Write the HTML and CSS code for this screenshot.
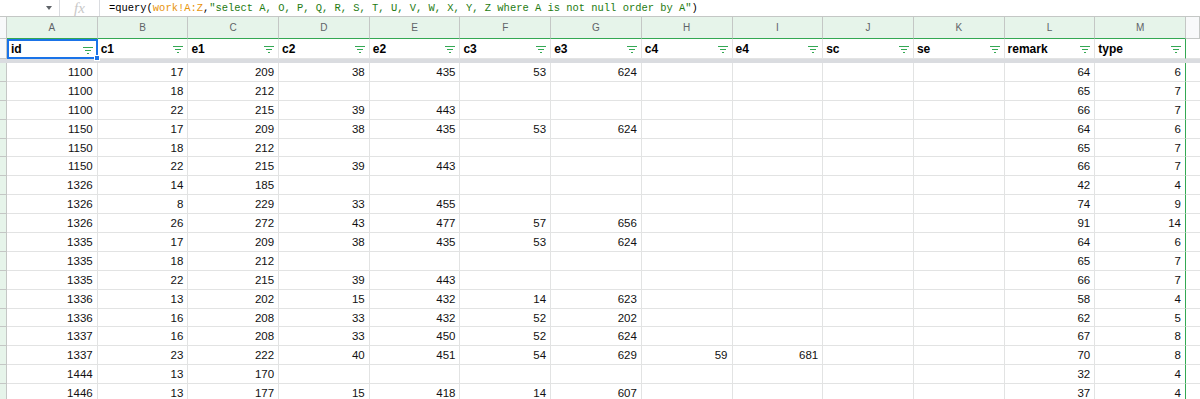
FILE: index.html
```html
<!DOCTYPE html>
<html lang="en">
<head>
	<meta charset="UTF-8">
	<title>work - query</title>
	<link rel="stylesheet" href="styles.css">
</head>
<body>
	<div class="formula-bar">
		<div class="name-box"><span class="arrow"></span></div>
		<div class="fx">fx</div>
		<div class="formula">=query(<span class="ref">work!A:Z</span>,<span class="str">"select A, O, P, Q, R, S, T, U, V, W, X, Y, Z where A is not null order by A"</span>)</div>
	</div>
	<div class="sheet" id="sheet">
		<div class="corner"></div>
		<div class="col-head">A</div>
		<div class="col-head">B</div>
		<div class="col-head">C</div>
		<div class="col-head">D</div>
		<div class="col-head">E</div>
		<div class="col-head">F</div>
		<div class="col-head">G</div>
		<div class="col-head">H</div>
		<div class="col-head">I</div>
		<div class="col-head">J</div>
		<div class="col-head">K</div>
		<div class="col-head">L</div>
		<div class="col-head">M</div>
		<div class="col-head rest"></div>

		<div class="row-head frozen"></div>
		<div class="field selected">id<i class="filter"></i><span class="handle"></span></div>
		<div class="field">c1<i class="filter"></i></div>
		<div class="field">e1<i class="filter"></i></div>
		<div class="field">c2<i class="filter"></i></div>
		<div class="field">e2<i class="filter"></i></div>
		<div class="field">c3<i class="filter"></i></div>
		<div class="field">e3<i class="filter"></i></div>
		<div class="field">c4<i class="filter"></i></div>
		<div class="field">e4<i class="filter"></i></div>
		<div class="field">sc<i class="filter"></i></div>
		<div class="field">se<i class="filter"></i></div>
		<div class="field">remark<i class="filter"></i></div>
		<div class="field last">type<i class="filter"></i></div>
		<div class="cell rest"></div>

		<div class="freeze"></div>
	</div>
	<script>
		const rows = [
			[1100, 17, 209, 38, 435, 53, 624, '', '', '', '', 64, 6],
			[1100, 18, 212, '', '', '', '', '', '', '', '', 65, 7],
			[1100, 22, 215, 39, 443, '', '', '', '', '', '', 66, 7],
			[1150, 17, 209, 38, 435, 53, 624, '', '', '', '', 64, 6],
			[1150, 18, 212, '', '', '', '', '', '', '', '', 65, 7],
			[1150, 22, 215, 39, 443, '', '', '', '', '', '', 66, 7],
			[1326, 14, 185, '', '', '', '', '', '', '', '', 42, 4],
			[1326, 8, 229, 33, 455, '', '', '', '', '', '', 74, 9],
			[1326, 26, 272, 43, 477, 57, 656, '', '', '', '', 91, 14],
			[1335, 17, 209, 38, 435, 53, 624, '', '', '', '', 64, 6],
			[1335, 18, 212, '', '', '', '', '', '', '', '', 65, 7],
			[1335, 22, 215, 39, 443, '', '', '', '', '', '', 66, 7],
			[1336, 13, 202, 15, 432, 14, 623, '', '', '', '', 58, 4],
			[1336, 16, 208, 33, 432, 52, 202, '', '', '', '', 62, 5],
			[1337, 16, 208, 33, 450, 52, 624, '', '', '', '', 67, 8],
			[1337, 23, 222, 40, 451, 54, 629, 59, 681, '', '', 70, 8],
			[1444, 13, 170, '', '', '', '', '', '', '', '', 32, 4],
			[1446, 13, 177, 15, 418, 14, 607, '', '', '', '', 37, 4]
		];

		const sheet = document.getElementById('sheet');
		for (let r = 0; r < rows.length; r++) {
			const head = document.createElement('div');
			head.className = 'row-head';
			sheet.appendChild(head);

			for (let c = 0; c < rows[r].length; c++) {
				const cell = document.createElement('div');
				cell.className = c === rows[r].length - 1 ? 'cell last' : 'cell';
				cell.innerText = rows[r][c];
				sheet.appendChild(cell);
			}

			const rest = document.createElement('div');
			rest.className = 'cell rest';
			sheet.appendChild(rest);
		}
	</script>
</body>
</html>
```

FILE: styles.css
```css
body {
	margin: 0;
	font-family: "Liberation Sans", Arial, sans-serif;
	color: #000;
	background: #fff;
	overflow: hidden;
}
.formula-bar {
	display: flex;
	align-items: center;
	height: 17px;
	border-bottom: 1px solid #c4c7c5;
	box-sizing: border-box;
}
.name-box {
	width: 59px;
	display: flex;
	justify-content: flex-end;
	padding-right: 7px;
	box-sizing: border-box;
}
.arrow {
	width: 0;
	height: 0;
	border-left: 3px solid transparent;
	border-right: 3px solid transparent;
	border-top: 4px solid #5f6368;
}
.fx {
	width: 39px;
	height: 16px;
	line-height: 16px;
	border-left: 1px solid #dadce0;
	border-right: 1px solid #dadce0;
	text-align: center;
	font-family: "Liberation Serif", serif;
	font-style: italic;
	font-size: 15px;
	color: #c8c8c8;
}
.formula {
	padding-left: 9px;
	font-family: "Liberation Mono", monospace;
	font-size: 10.45px;
	color: #000;
	white-space: nowrap;
}
.formula .ref {
	color: #e8940c;
}
.formula .str {
	color: #1e7b12;
}

.sheet {
	display: grid;
	grid-template-columns: 7px repeat(13, 90.7px) 1fr;
	grid-template-rows: 22px 20px 4px repeat(18, 18.9px);
	font-size: 11px;
}
.sheet > div {
	box-sizing: border-box;
	border-right: 1px solid #e2e3e3;
	border-bottom: 1px solid #e2e3e3;
	overflow: hidden;
	white-space: nowrap;
}
.sheet > .corner {
	background: #f8f9fa;
	border-right: 1px solid #c4c7c5;
	border-bottom: 1px solid #c4c7c5;
}
.sheet > .col-head {
	background: #e6f4ea;
	color: #5f6368;
	font-size: 10px;
	text-align: center;
	line-height: 21px;
	border-right: 1px solid #c4c7c5;
	border-bottom: 1px solid #34a853;
}
.sheet > .col-head.rest {
	background: #f8f9fa;
	border-bottom-color: #c4c7c5;
}
.sheet > .row-head {
	background: #e6f4ea;
	border-right: 1px solid #c4c7c5;
	border-bottom: 1px solid #c4c7c5;
}
.sheet > .row-head.frozen {
	background: #f8f9fa;
}
.sheet > .field {
	position: relative;
	display: flex;
	align-items: center;
	justify-content: space-between;
	padding: 0 4px 0 3px;
	font-weight: bold;
	font-size: 12px;
	overflow: visible;
}
.sheet > .field.selected {
	border: 2px solid #1a73e8;
	padding-left: 2px;
	padding-right: 3px;
}
.handle {
	position: absolute;
	right: -4px;
	bottom: -4px;
	width: 6px;
	height: 6px;
	background: #1a73e8;
	border: 1px solid #fff;
	box-sizing: border-box;
	z-index: 2;
}
.filter {
	width: 10px;
	height: 7px;
	margin-top: 2px;
	background:
		linear-gradient(#34a853, #34a853) 0 0 / 10px 1px no-repeat,
		linear-gradient(#34a853, #34a853) 2px 3px / 6px 1px no-repeat,
		linear-gradient(#34a853, #34a853) 4px 6px / 2px 1px no-repeat;
}
.sheet > .last {
	border-right: 1px solid #34a853;
}
.sheet > .freeze {
	grid-column: 1 / -1;
	background: #dadce0;
	border: none;
}
.sheet > .cell {
	text-align: right;
	padding-right: 4px;
	line-height: 19px;
	font-size: 11.5px;
	color: #111;
}
.sheet > .cell.rest {
	border-right: none;
}
```
